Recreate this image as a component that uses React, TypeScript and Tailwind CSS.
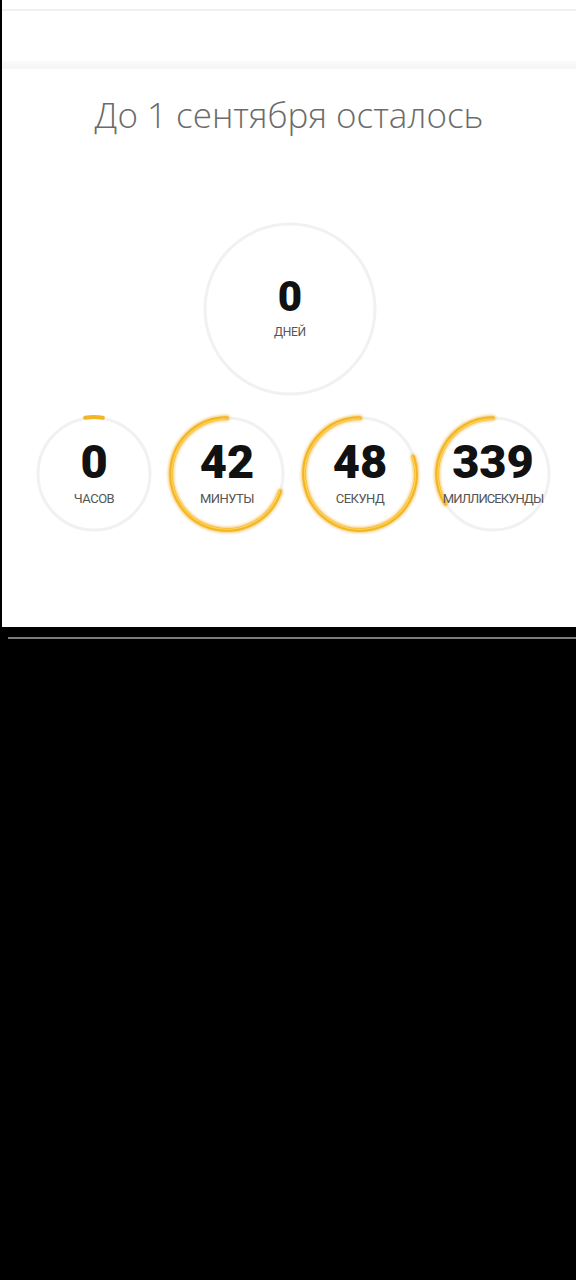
import React from 'react';

interface RingProps {
  size: number;
  value: string;
  label: string;
  // fraction of the ring filled, counter-clockwise from 12 o'clock
  fraction: number;
  numberClass: string;
  labelClass: string;
  dot?: boolean;
}

const arcPath = (c: number, r: number, from: number, to: number) => {
  const a1 = ((-90 - from * 360) * Math.PI) / 180;
  const a2 = ((-90 - to * 360) * Math.PI) / 180;
  const x1 = c + r * Math.cos(a1);
  const y1 = c + r * Math.sin(a1);
  const x2 = c + r * Math.cos(a2);
  const y2 = c + r * Math.sin(a2);
  const large = Math.abs(to - from) > 0.5 ? 1 : 0;
  return `M ${x1} ${y1} A ${r} ${r} 0 ${large} 0 ${x2} ${y2}`;
};

const Ring: React.FC<RingProps> = ({ size, value, label, fraction, numberClass, labelClass, dot }) => {
  const c = size / 2;
  const r = c - 4;
  return (
    <div className="relative shrink-0" style={{ width: size, height: size }}>
      <svg width={size} height={size} className="absolute inset-0 overflow-visible">
        <defs>
          <filter id={`glow-${label}`} x="-20%" y="-20%" width="140%" height="140%">
            <feGaussianBlur stdDeviation="1.6" />
          </filter>
        </defs>
        <circle cx={c} cy={c} r={r} fill="none" stroke="#f1f1f1" strokeWidth={3} />
        {fraction > 0 && (
          <g>
            <path
              d={arcPath(c, r, 0, fraction)}
              fill="none"
              stroke="#f0a81c"
              strokeWidth={5}
              strokeLinecap="round"
              filter={`url(#glow-${label})`}
              opacity={0.8}
            />
            <path d={arcPath(c, r, 0, fraction)} fill="none" stroke="#f4b524" strokeWidth={3.5} strokeLinecap="round" />
            <path d={arcPath(c, r - 0.8, 0, fraction)} fill="none" stroke="#ffd451" strokeWidth={1.2} strokeLinecap="round" />
          </g>
        )}
        {dot && (
          <path
            d={arcPath(c, r + 1, -0.025, 0.025)}
            fill="none"
            stroke="#f4b524"
            strokeWidth={4}
            strokeLinecap="round"
          />
        )}
      </svg>
      <div className="absolute inset-0 flex flex-col items-center justify-center">
        <span className={`font-['Roboto'] font-black text-[#111] leading-none ${numberClass}`}>{value}</span>
        <span className={`font-['Roboto'] uppercase text-[#555] leading-none whitespace-nowrap ${labelClass}`}>{label}</span>
      </div>
    </div>
  );
};

export default function App() {
  return (
    <div className="w-[576px] h-[1280px] bg-black overflow-hidden">
      <div className="h-[627px] bg-white border-l-2 border-black flex flex-col">
        {/* top browser strip */}
        <div className="h-[11px] border-b-2 border-[#f1f1f1]" />
        <div className="h-[50px]" />
        {/* card */}
        <div className="flex-1 flex flex-col">
          <div className="h-[8px] bg-gradient-to-b from-[#fafafa] to-[#f5f5f5]" />
          <h1 className="mt-[22px] text-center font-['Open_Sans'] font-light text-[35px] leading-[48px] text-[#6b6b6b]">
            До 1 сентября осталось
          </h1>
          <div className="mt-[81px] flex justify-center pl-[2px]">
            <Ring
              size={178}
              value="0"
              label="Дней"
              fraction={0}
              numberClass="text-[42px] mt-[-4px]"
              labelClass="text-[12px] mt-[8px] tracking-[-0.3px]"
            />
          </div>
          <div className="mt-[16px] flex gap-[13px] pl-[32px]">
            <Ring
              size={120}
              value="0"
              label="Часов"
              fraction={0}
              dot
              numberClass="text-[47px] mt-[-6px]"
              labelClass="text-[13px] mt-[7px] tracking-[-0.5px]"
            />
            <Ring
              size={120}
              value="42"
              label="минуты"
              fraction={0.7}
              numberClass="text-[47px] mt-[-6px]"
              labelClass="text-[13px] mt-[7px] tracking-[-0.5px]"
            />
            <Ring
              size={120}
              value="48"
              label="секунд"
              fraction={0.8}
              numberClass="text-[47px] mt-[-6px]"
              labelClass="text-[13px] mt-[7px] tracking-[-0.5px]"
            />
            <Ring
              size={120}
              value="339"
              label="миллисекунды"
              fraction={0.339}
              numberClass="text-[47px] mt-[-6px]"
              labelClass="text-[13px] mt-[7px] tracking-[-0.9px]"
            />
          </div>
        </div>
      </div>
      <div className="mt-[10px] ml-[8px] h-[2px] bg-[#7a7a7a]" />
    </div>
  );
}
